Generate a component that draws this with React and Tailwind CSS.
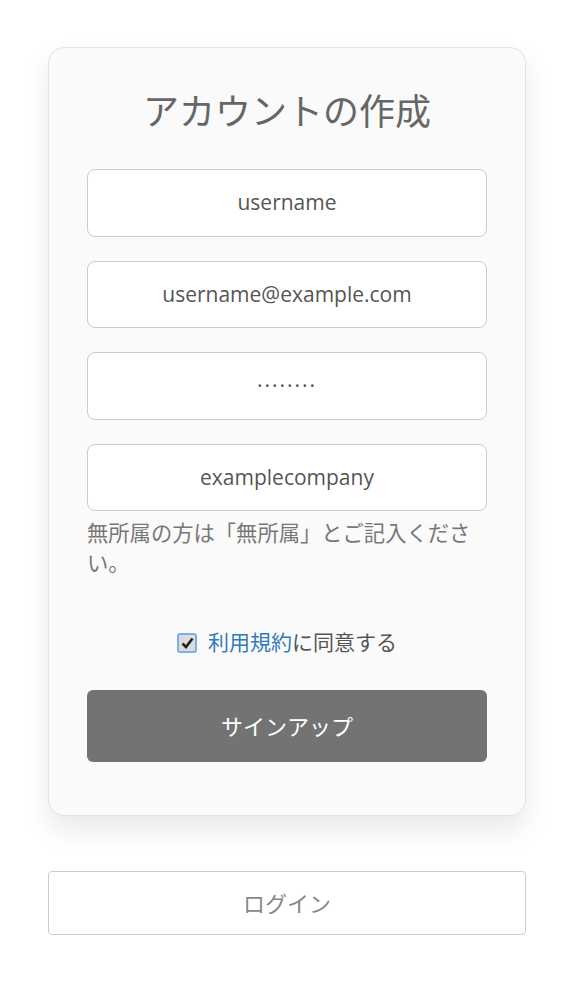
const font = { fontFamily: '"Open Sans", "Noto Sans CJK JP", sans-serif' };

const Field = ({ value, dots }) => (
  <div
    className={`h-[67.5px] rounded-lg border border-[#cccccc] bg-white flex items-center justify-center text-[21px] text-[#555555] ${
      dots ? "tracking-[2px]" : ""
    }`}
  >
    {value}
  </div>
);

const App = () => {
  return (
    <div className="min-h-screen bg-white pt-[47px] pb-[56px]" style={font}>
      {/* Signup card */}
      <div className="ml-12 w-[478px] rounded-2xl border border-[#e3e3e3] bg-[#fafafa] px-[38px] pt-[36px] pb-[53px] shadow-[0_14px_28px_rgba(0,0,0,0.09)]">
        <h1 className="text-center text-[36px] leading-[56px] text-[#666666] mb-[29px]">
          アカウントの作成
        </h1>

        <div className="flex flex-col gap-6">
          <Field value="username" />
          <Field value="username@example.com" />
          <Field value="········" dots />
          <Field value="examplecompany" />
        </div>

        <p className="mt-[7px] text-[21.3px] leading-[30px] text-[#777777]">
          無所属の方は「無所属」とご記入ください。
        </p>

        <div className="mt-[50px] h-[30px] flex items-center justify-center text-[21px] text-[#555555]">
          <span className="mr-[11px] w-[20px] h-[20px] rounded-[3px] border-2 border-[#7eaee6] bg-[#dcdcdc] flex items-center justify-center">
            <svg width="13" height="12" viewBox="0 0 13 12">
              <path d="M1.5 6.5 L5 10 L11.5 1.5" fill="none" stroke="#222" strokeWidth="2.6" />
            </svg>
          </span>
          <span className="text-[#337ab7]">利用規約</span>
          <span>に同意する</span>
        </div>

        <button className="mt-[32px] w-full h-[72px] rounded-md bg-[#737373] text-white text-[22px]">
          サインアップ
        </button>
      </div>

      {/* Login */}
      <button className="mt-[55px] ml-12 w-[478px] h-[64px] rounded border border-[#cccccc] bg-white text-[22px] text-[#888888]">
        ログイン
      </button>
    </div>
  );
};

export default App;
